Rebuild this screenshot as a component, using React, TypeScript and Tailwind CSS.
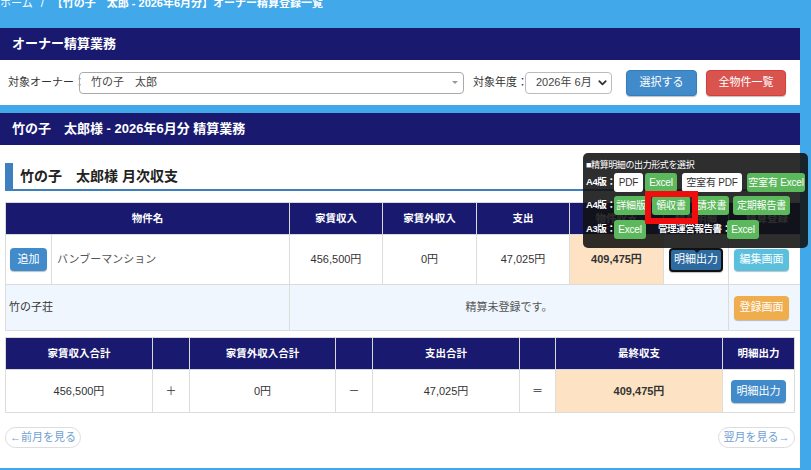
import React from "react";

const FONT = "font-['Liberation_Sans','Noto_Sans_CJK_JP',sans-serif]";

const th = "border border-[#d9d9d9] bg-[#191970] text-white text-[10.5px] font-bold text-center";
const td = "border border-[#dcdcdc] text-[11px] text-[#333] text-center";
const btn =
	"inline-flex shrink-0 items-center justify-center rounded-[4px] text-white text-[11px] shadow-[0_1px_1px_rgba(0,0,0,0.25)]";
const popLabel = "shrink-0 text-[9.5px] font-bold tracking-[-0.4px]";

const PopBtn = ({ label, w, white }: { label: string; w: number; white?: boolean }) => (
	<span
		style={{ width: w }}
		className={`inline-flex shrink-0 h-[19px] items-center justify-center rounded-[3px] text-[10px] tracking-[-0.2px] ${
			white ? "bg-white text-[#333]" : "bg-[#5cb85c] text-white"
		}`}>
		{label}
	</span>
);

const App = () => {
	return (
		<div className={`relative w-[811px] h-[470px] overflow-hidden whitespace-nowrap bg-[#41a8ea] ${FONT}`}>
			{/* breadcrumb */}
			<div className="h-[28px] flex items-start">
				<div className="-mt-[4px] flex text-[11px] leading-[14px] text-white">
					<span>ホーム</span>
					<span className="mx-[8px]">/</span>
					<span className="font-bold">【竹の子　太郎 - 2026年6月分】オーナー精算登録一覧</span>
				</div>
			</div>

			{/* owner select panel */}
			<div className="w-[800px] bg-white">
				<div className="h-[32px] bg-[#191970] px-[12px] flex items-center text-white font-bold text-[13px]">
					オーナー精算業務
				</div>
				<div className="h-[45px] flex items-center pl-[8px] text-[11px] text-[#333]">
					<span className="w-[71px] shrink-0">対象オーナー：</span>
					<div className="w-[385px] shrink-0 h-[22px] border border-[#aaa] rounded-[4px] flex items-center justify-between pl-[11px] pr-[5px]">
						<span className="text-[#444]">竹の子　太郎</span>
						<span className="w-0 h-0 border-x-[3px] border-x-transparent border-t-[3px] border-t-[#999]" />
					</div>
					<span className="ml-[9px] w-[52px] shrink-0">対象年度：</span>
					<div className="w-[87px] shrink-0 h-[22px] border border-[#bbb] rounded-[4px] flex items-center justify-between pl-[10px] pr-[3px]">
						<span className="text-[#444]">2026年 6月</span>
						<svg width="11" height="11" viewBox="0 0 24 24" fill="none" stroke="#333" strokeWidth="4" strokeLinecap="round" strokeLinejoin="round">
							<path d="M5 9l7 7 7-7" />
						</svg>
					</div>
					<span className={`${btn} ml-[14px] w-[71px] h-[26px] bg-[#428bca] border border-[#357ebd]`}>選択する</span>
					<span className={`${btn} ml-[9px] w-[80px] h-[26px] bg-[#d9534f] border border-[#d43f3a]`}>全物件一覧</span>
				</div>
			</div>

			{/* monthly panel */}
			<div className="mt-[8px] w-[800px] h-[355px] bg-white overflow-hidden">
				<div className="h-[32px] bg-[#191970] px-[12px] flex items-center text-white font-bold text-[13px]">
					竹の子　太郎様 - 2026年6月分 精算業務
				</div>

				<div className="pt-[18px]">
					<div className="ml-[5px] h-[28px] flex items-center border-l-[8px] border-b-2 border-[#3d7fbf] pl-[7px] text-[14px] font-bold text-[#222]">
						竹の子　太郎様 月次収支
					</div>

					<table className="mt-[11px] ml-[5px] border-collapse table-fixed w-[800px]">
						<colgroup>
							<col className="w-[46px]" />
							<col className="w-[238px]" />
							<col className="w-[93px]" />
							<col className="w-[94px]" />
							<col className="w-[93px]" />
							<col className="w-[94px]" />
							<col className="w-[65px]" />
							<col className="w-[77px]" />
						</colgroup>
						<thead>
							<tr className="h-[32px]">
								<th colSpan={2} className={th}>物件名</th>
								<th className={th}>家賃収入</th>
								<th className={th}>家賃外収入</th>
								<th className={th}>支出</th>
								<th className={th}>物件収支</th>
								<th className={th}>精算明細</th>
								<th className={th}>精算登録</th>
							</tr>
						</thead>
						<tbody>
							<tr className="h-[50px]">
								<td className={td}>
									<span className={`${btn} w-[37px] h-[23px] bg-[#428bca]`}>追加</span>
								</td>
								<td className={`${td} text-left pl-[5px] text-[#555]`}>バンブーマンション</td>
								<td className={td}>456,500円</td>
								<td className={td}>0円</td>
								<td className={td}>47,025円</td>
								<td className={`${td} bg-[#fde3c4] font-bold`}>409,475円</td>
								<td className={td}>
									<span className={`${btn} w-[54px] h-[24px] bg-[#2d6aa0] border-2 border-[#111]`}>明細出力</span>
								</td>
								<td className={`${td} text-left pl-[5px]`}>
									<span className={`${btn} w-[55px] h-[22px] bg-[#5bc0de]`}>編集画面</span>
								</td>
							</tr>
							<tr className="h-[46px] bg-[#eff6fd]">
								<td colSpan={2} className={`${td} text-left pl-[3px] text-[10.5px]`}>竹の子荘</td>
								<td colSpan={5} className={`${td} text-[10.5px] text-[#555]`}>精算未登録です。</td>
								<td className={`${td} text-left pl-[5px]`}>
									<span className={`${btn} w-[55px] h-[24px] bg-[#f0ad4e]`}>登録画面</span>
								</td>
							</tr>
						</tbody>
					</table>

					<table className="mt-[6px] ml-[5px] border-collapse table-fixed w-[789px]">
						<colgroup>
							<col className="w-[147px]" />
							<col className="w-[37px]" />
							<col className="w-[146px]" />
							<col className="w-[37px]" />
							<col className="w-[147px]" />
							<col className="w-[36px]" />
							<col className="w-[167px]" />
							<col className="w-[72px]" />
						</colgroup>
						<thead>
							<tr className="h-[32px]">
								<th className={th}>家賃収入合計</th>
								<th className={th}></th>
								<th className={th}>家賃外収入合計</th>
								<th className={th}></th>
								<th className={th}>支出合計</th>
								<th className={th}></th>
								<th className={th}>最終収支</th>
								<th className={th}>明細出力</th>
							</tr>
						</thead>
						<tbody>
							<tr className="h-[43px]">
								<td className={td}>456,500円</td>
								<td className={td}>＋</td>
								<td className={td}>0円</td>
								<td className={td}>－</td>
								<td className={td}>47,025円</td>
								<td className={td}>＝</td>
								<td className={`${td} bg-[#fde3c4] font-bold`}>409,475円</td>
								<td className={td}>
									<span className={`${btn} w-[55px] h-[23px] bg-[#428bca]`}>明細出力</span>
								</td>
							</tr>
						</tbody>
					</table>

					<div className="mt-[14px] flex justify-between px-[5px]">
						<span className="inline-flex items-center justify-center w-[76px] h-[21px] rounded-full border border-[#ddd] text-[11px] text-[#6f9fd2]">
							←前月を見る
						</span>
						<span className="inline-flex items-center justify-center w-[77px] h-[21px] rounded-full border border-[#ddd] text-[11px] text-[#6f9fd2]">
							翌月を見る→
						</span>
					</div>
				</div>
			</div>

			{/* output format popover */}
			<div className="absolute left-[583px] top-[153px] w-[225px] h-[95px] rounded-[5px] bg-[#111]/[0.88] pt-[6px] pl-[3px] text-white">
				<div className="text-[9px] leading-[12px] tracking-[-0.4px]">■精算明細の出力形式を選択</div>
				<div className="mt-[2px] flex items-center h-[19px]">
					<span className={`${popLabel} w-[28px]`}>A4版：</span>
					<div className="flex gap-[2px]">
						<PopBtn label="PDF" w={29} white />
						<PopBtn label="Excel" w={32} />
						<span className="w-[1px]" />
						<PopBtn label="空室有 PDF" w={60} white />
						<span className="w-[1px]" />
						<PopBtn label="空室有 Excel" w={58} />
					</div>
				</div>
				<div className="mt-[4px] flex items-center h-[19px]">
					<span className={`${popLabel} w-[28px]`}>A4版：</span>
					<div className="flex gap-[4px]">
						<PopBtn label="詳細版" w={34} />
						<PopBtn label="領収書" w={38} />
						<PopBtn label="請求書" w={35} />
						<PopBtn label="定期報告書" w={57} />
					</div>
				</div>
				<div className="mt-[5px] flex items-center h-[19px]">
					<span className={`${popLabel} w-[28px]`}>A3版：</span>
					<PopBtn label="Excel" w={32} />
					<span className={`${popLabel} ml-[12px] w-[69px]`}>管理運営報告書：</span>
					<PopBtn label="Excel" w={32} />
				</div>
			</div>
			<div className="absolute left-[692px] top-[248px] w-0 h-0 border-x-[5px] border-x-transparent border-t-[5px] border-t-[#111]/[0.88]" />

			{/* highlight */}
			<div className="absolute left-[645px] top-[191px] w-[53px] h-[33px] border-[6px] border-[#f00d0d]" />
		</div>
	);
};

export default App;
